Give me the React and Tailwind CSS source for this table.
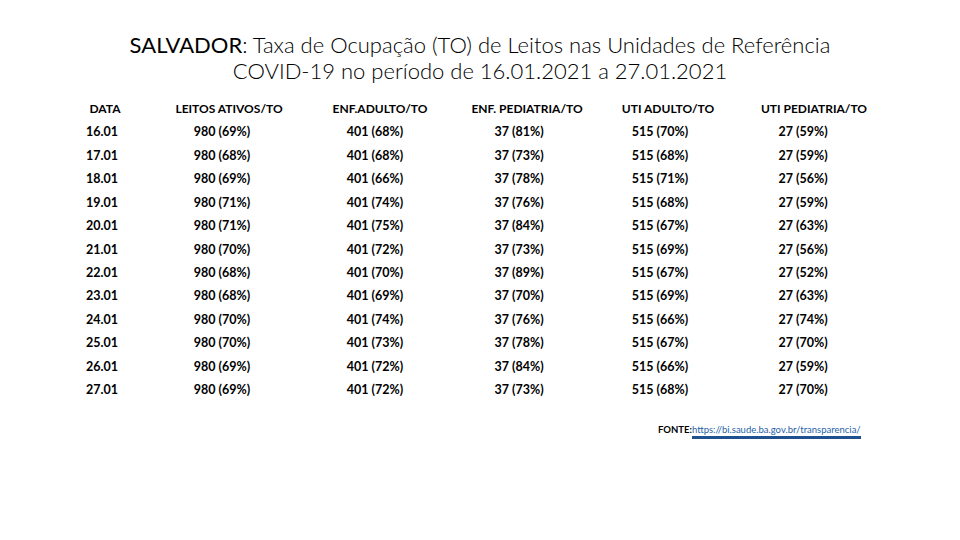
import React from 'react';

const rows = [
  ['16.01', '980 (69%)', '401 (68%)', '37 (81%)', '515 (70%)', '27 (59%)'],
  ['17.01', '980 (68%)', '401 (68%)', '37 (73%)', '515 (68%)', '27 (59%)'],
  ['18.01', '980 (69%)', '401 (66%)', '37 (78%)', '515 (71%)', '27 (56%)'],
  ['19.01', '980 (71%)', '401 (74%)', '37 (76%)', '515 (68%)', '27 (59%)'],
  ['20.01', '980 (71%)', '401 (75%)', '37 (84%)', '515 (67%)', '27 (63%)'],
  ['21.01', '980 (70%)', '401 (72%)', '37 (73%)', '515 (69%)', '27 (56%)'],
  ['22.01', '980 (68%)', '401 (70%)', '37 (89%)', '515 (67%)', '27 (52%)'],
  ['23.01', '980 (68%)', '401 (69%)', '37 (70%)', '515 (69%)', '27 (63%)'],
  ['24.01', '980 (70%)', '401 (74%)', '37 (76%)', '515 (66%)', '27 (74%)'],
  ['25.01', '980 (70%)', '401 (73%)', '37 (78%)', '515 (67%)', '27 (70%)'],
  ['26.01', '980 (69%)', '401 (72%)', '37 (84%)', '515 (66%)', '27 (59%)'],
  ['27.01', '980 (69%)', '401 (72%)', '37 (73%)', '515 (68%)', '27 (70%)'],
];

const headers = ['DATA', 'LEITOS ATIVOS/TO', 'ENF.ADULTO/TO', 'ENF. PEDIATRIA/TO', 'UTI ADULTO/TO', 'UTI PEDIATRIA/TO'];

// cell offsets so data lines up like the slide
const cellPad = ['text-left pl-[40px]', 'pr-[14px]', 'pr-[10px]', 'pr-[16px]', 'pr-[16px]', 'pr-[22px]'];

const App = () => {
  return (
    <div className="w-[960px] h-[540px] bg-white text-black overflow-hidden" style={{ fontFamily: 'Lato, "Liberation Sans", sans-serif' }}>

      {/* Title */}
      <div className="pt-[32px] text-center text-[22px] leading-[26px] font-light">
        <p><span className="font-normal">SALVADOR</span>: Taxa de Ocupação (TO) de Leitos nas Unidades de Referência</p>
        <p>COVID-19 no período de 16.01.2021 a 27.01.2021</p>
      </div>

      {/* Table */}
      <div className="mt-[13px] pl-[46px]">
        <div className="grid grid-cols-[118px_130px_172px_122px_160px_132px] h-[24px] items-center text-[12px] font-bold">
          {headers.map((h, i) => (
            <div key={i} className="text-center whitespace-nowrap">{h}</div>
          ))}
        </div>
        {rows.map((r, ri) => (
          <div key={ri} className="grid grid-cols-[118px_130px_172px_122px_160px_132px] h-[23.45px] items-center text-[12.5px] font-bold">
            {r.map((c, ci) => (
              <div key={ci} className={`text-center whitespace-nowrap ${cellPad[ci]}`}>{c}</div>
            ))}
          </div>
        ))}
      </div>

      {/* Source */}
      <div className="mt-[22px] pl-[658px] text-[9.5px] leading-[12px] whitespace-nowrap">
        <span className="font-bold">FONTE:</span>
        <span className="text-[#1f5fa8] border-b-[3px] border-[#1f5090] pb-[1px]">https://bi.saude.ba.gov.br/transparencia/</span>
      </div>
    </div>
  );
};

export default App;
